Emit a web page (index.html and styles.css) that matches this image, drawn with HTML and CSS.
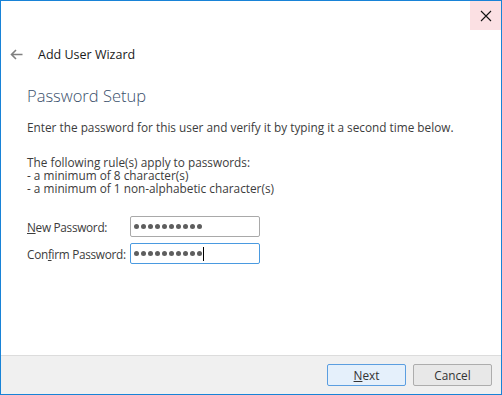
FILE: index.html
```html
<!doctype html>
<html lang="en">
    <head>
        <meta charset="UTF-8" />
        <title>Add User Wizard</title>
        <link rel="stylesheet" href="styles.css">
    </head>
    <body>
        <div class="window">
            <div class="titlebar">
                <div class="close-btn">
                    <svg width="12" height="12" viewBox="0 0 12 12">
                        <path d="M1 1L11 11M11 1L1 11" stroke="#111" stroke-width="1.1" fill="none" />
                    </svg>
                </div>
            </div>
            <div class="wizard-head">
                <svg class="back-arrow" width="13" height="11" viewBox="0 0 13 11">
                    <path d="M6 1L1.5 5.5L6 10M1.5 5.5H12.5" stroke="#808080" stroke-width="1.6" fill="none" />
                </svg>
                <span class="wizard-title">Add User Wizard</span>
            </div>
            <div class="content">
                <h1 class="page-title">Password Setup</h1>
                <p class="intro">Enter the password for this user and verify it by typing it a second time below.</p>
                <div class="rules">
                    <div>The following rule(s) apply to passwords:</div>
                    <div>- a minimum of 8 character(s)</div>
                    <div>- a minimum of 1 non-alphabetic character(s)</div>
                </div>
                <div class="form">
                    <div class="form-row">
                        <label class="field-label"><u>N</u>ew Password:</label>
                        <div class="pw-box">
                            <span class="dot"></span><span class="dot"></span><span class="dot"></span><span class="dot"></span><span class="dot"></span><span class="dot"></span><span class="dot"></span><span class="dot"></span><span class="dot"></span><span class="dot"></span>
                        </div>
                    </div>
                    <div class="form-row">
                        <label class="field-label">Con<u>f</u>irm Password:</label>
                        <div class="pw-box focused">
                            <span class="dot"></span><span class="dot"></span><span class="dot"></span><span class="dot"></span><span class="dot"></span><span class="dot"></span><span class="dot"></span><span class="dot"></span><span class="dot"></span><span class="dot"></span><span class="caret"></span>
                        </div>
                    </div>
                </div>
            </div>
            <div class="footer">
                <div class="btn default"><u>N</u>ext</div>
                <div class="btn">Cancel</div>
            </div>
        </div>
    </body>
</html>
```

FILE: styles.css
```css
html,
body {
    margin: 0;
    padding: 0;
    background: #fff;
}

body {
    font-family: "Open Sans", "Noto Sans", sans-serif;
    font-size: 11.8px;
    color: #3c3c3c;
}

.window {
    width: 500px;
    height: 393px;
    border: 1px solid #1883d7;
    display: flex;
    flex-direction: column;
    background: #fff;
}

.titlebar {
    height: 29px;
    display: flex;
    justify-content: flex-end;
}

.close-btn {
    width: 31px;
    height: 29px;
    background: #fbe0e3;
    display: flex;
    align-items: center;
    justify-content: center;
}

.wizard-head {
    height: 50px;
    display: flex;
    align-items: center;
    padding-left: 9px;
    margin-top: -1px;
}

.back-arrow {
    margin-right: 15px;
}

.wizard-title {
    font-size: 12.5px;
    color: #1a1a1a;
}

.content {
    flex: 1;
    padding: 0 26px;
}

.page-title {
    font-size: 16.5px;
    font-weight: 300;
    color: #3a4f6b;
    margin: 6px 0 0;
    line-height: 22px;
}

.intro {
    margin: 13px 0 0;
    line-height: 14px;
}

.rules {
    margin-top: 22px;
    line-height: 13px;
}

.form {
    margin-top: 21px;
    display: flex;
    flex-direction: column;
    gap: 6px;
}

.form-row {
    display: flex;
    align-items: center;
}

.field-label {
    width: 103px;
    flex-shrink: 0;
    white-space: nowrap;
    letter-spacing: -0.3px;
}

.pw-box {
    width: 125px;
    height: 19px;
    border: 1px solid #a9a9a9;
    border-radius: 2px;
    padding: 0 0 0 3px;
    display: flex;
    align-items: center;
}

.pw-box.focused {
    border-color: #4a9ae0;
}

.dot {
    width: 5px;
    height: 5px;
    border-radius: 50%;
    background: #5e5e5e;
    margin-right: 2px;
}

.caret {
    width: 1px;
    height: 14px;
    background: #000;
    margin-left: -1px;
}

.footer {
    height: 38px;
    border-top: 1px solid #dcdcdc;
    background: #f0f0f0;
    display: flex;
    justify-content: flex-end;
    align-items: center;
    gap: 7px;
    padding-right: 9px;
}

.btn {
    width: 77px;
    height: 20px;
    border: 1px solid #adadad;
    border-radius: 2px;
    background: #e8e8e8;
    display: flex;
    align-items: center;
    justify-content: center;
    color: #333;
}

.btn.default {
    border-color: #5b9ee0;
    background: #e5f0fb;
}
```
